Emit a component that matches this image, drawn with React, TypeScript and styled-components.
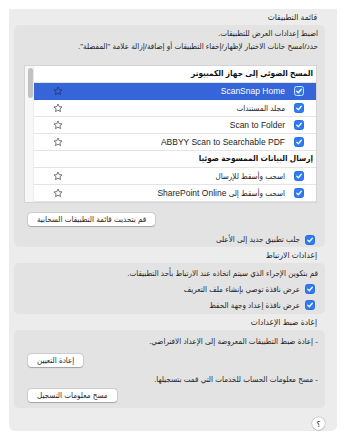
import React from 'react';
import styled, { createGlobalStyle } from 'styled-components';

const GlobalStyle = createGlobalStyle`
  html, body {
    margin: 0;
    padding: 0;
    background: #ffffff;
  }
  body {
    font-family: "Liberation Sans", "DejaVu Sans Condensed", "DejaVu Sans", sans-serif;
    color: #1e1e1e;
  }
`;

const Latin = styled.span`
  font-family: "Liberation Sans", sans-serif;
  font-size: 8.5px;
`;

const scanApps = [
  { name: <Latin>ScanSnap Home</Latin>, key: 'home', selected: true },
  { name: 'مجلد المستندات', key: 'docs', selected: false },
  { name: <Latin>Scan to Folder</Latin>, key: 'folder', selected: false },
  { name: <Latin>ABBYY Scan to Searchable PDF</Latin>, key: 'abbyy', selected: false },
];

const sendApps = [
  { name: 'اسحب وأسقط للإرسال', key: 'send' },
  {
    name: (
      <>
        اسحب وأسقط إلى <Latin>SharePoint Online</Latin>
      </>
    ),
    key: 'sharepoint',
  },
];

const Star = () => (
  <svg width="10" height="10" viewBox="0 0 24 24">
    <polygon
      points="12,2.5 14.9,8.7 21.6,9.4 16.6,13.9 18,20.6 12,17.2 6,20.6 7.4,13.9 2.4,9.4 9.1,8.7"
      fill="none"
      stroke="currentColor"
      strokeWidth="1.8"
      strokeLinejoin="round"
    />
  </svg>
);

const Check = ({ onBlue = false }: { onBlue?: boolean }) => (
  <CheckBox $onBlue={onBlue}>
    <svg width="8" height="8" viewBox="0 0 10 10">
      <path d="M2.2 5.3 L4.2 7.2 L7.9 2.8" fill="none" stroke="#fff" strokeWidth="1.5" strokeLinecap="round" strokeLinejoin="round" />
    </svg>
  </CheckBox>
);

export default function App() {
  return (
    <>
      <GlobalStyle />
      <Page>
        <Panel>
          <SectionTitle>قائمة التطبيقات</SectionTitle>
          <Box $padTop={2} $height={222}>
            <Line>اضبط إعدادات العرض للتطبيقات.</Line>
            <Line>حدد/امسح خانات الاختيار لإظهار/إخفاء التطبيقات أو إضافة/إزالة علامة "المفضلة".</Line>
            <List>
              <Rows>
                <HeaderRow>المسح الضوئي إلى جهاز الكمبيوتر</HeaderRow>
                {scanApps.map((app) => (
                  <AppRow key={app.key} $selected={app.selected}>
                    <Check onBlue={app.selected} />
                    <AppName>{app.name}</AppName>
                    <StarCell $selected={app.selected}>
                      <Star />
                    </StarCell>
                  </AppRow>
                ))}
                <HeaderRow>إرسال البيانات الممسوحة ضوئيا</HeaderRow>
                {sendApps.map((app) => (
                  <AppRow key={app.key}>
                    <Check />
                    <AppName>{app.name}</AppName>
                    <StarCell>
                      <Star />
                    </StarCell>
                  </AppRow>
                ))}
              </Rows>
              <ScrollTrack>
                <ScrollThumb />
              </ScrollTrack>
            </List>
            <Button $top={10}>قم بتحديث قائمة التطبيقات السحابية</Button>
            <CheckRow $top={6}>
              <Check />
              <span>جلب تطبيق جديد إلى الأعلى</span>
            </CheckRow>
          </Box>

          <SectionTitle>إعدادات الارتباط</SectionTitle>
          <Box $padTop={4} $height={51}>
            <Line>قم بتكوين الإجراء الذي سيتم اتخاذه عند الارتباط بأحد التطبيقات.</Line>
            <CheckRow $top={1}>
              <Check />
              <span>عرض نافذة توصي بإنشاء ملف التعريف</span>
            </CheckRow>
            <CheckRow $top={0}>
              <Check />
              <span>عرض نافذة إعداد وجهة الحفظ</span>
            </CheckRow>
          </Box>

          <SectionTitle>إعادة ضبط الإعدادات</SectionTitle>
          <Box $padTop={5} $height={78}>
            <Line>- إعادة ضبط التطبيقات المعروضة إلى الإعداد الافتراضي.</Line>
            <Button $top={6}>إعادة التعيين</Button>
            <Line $top={6}>- مسح معلومات الحساب للخدمات التي قمت بتسجيلها.</Line>
            <Button $top={3}>مسح معلومات التسجيل</Button>
          </Box>

          <Footer>
            <HelpButton>؟</HelpButton>
          </Footer>
        </Panel>
      </Page>
    </>
  );
}

const Page = styled.div`
  width: 344px;
  height: 447px;
  box-sizing: border-box;
  padding: 9px 0 0 9px;
`;

const Panel = styled.div`
  direction: rtl;
  width: 328px;
  height: 422px;
  box-sizing: border-box;
  background: #ececec;
  border-radius: 0 0 6px 6px;
  padding: 0 12px 0 5px;
  display: flex;
  flex-direction: column;
`;

const SectionTitle = styled.div`
  height: 16px;
  line-height: 16px;
  padding-right: 8px;
  font-size: 8.4px;
  color: #262626;
`;

const Box = styled.div<{ $padTop: number; $height: number }>`
  height: ${(p) => p.$height}px;
  box-sizing: border-box;
  background: #e3e3e3;
  border-radius: 5px;
  padding: ${(p) => p.$padTop}px 7px 0 10px;
  display: flex;
  flex-direction: column;
`;

const Line = styled.div<{ $top?: number }>`
  margin-top: ${(p) => p.$top ?? 0}px;
  font-size: 8px;
  line-height: 13px;
  white-space: nowrap;
  color: #1e1e1e;
`;

const List = styled.div`
  margin: 12px 1px 0 0;
  display: flex;
  background: #ffffff;
  border: 1px solid #d4d4d4;
`;

const Rows = styled.div`
  flex: 1;
  display: flex;
  flex-direction: column;
`;

const HeaderRow = styled.div`
  height: 17px;
  box-sizing: border-box;
  border-bottom: 1px solid #e4e4e4;
  padding-right: 3px;
  font-size: 8.2px;
  font-weight: bold;
  line-height: 16px;
  color: #111;
`;

const AppRow = styled.div<{ $selected?: boolean }>`
  height: 17px;
  box-sizing: border-box;
  border-bottom: 1px solid ${(p) => (p.$selected ? '#3565d8' : '#e4e4e4')};
  background: ${(p) => (p.$selected ? '#3565d8' : '#ffffff')};
  color: ${(p) => (p.$selected ? '#ffffff' : '#1e1e1e')};
  display: flex;
  align-items: center;
  padding-right: 12px;
  font-size: 8px;
`;

const AppName = styled.span`
  flex: 1;
  margin-right: 9px;
  white-space: nowrap;
`;

const StarCell = styled.span<{ $selected?: boolean }>`
  display: flex;
  margin-left: 19px;
  color: ${(p) => (p.$selected ? '#1c2f66' : '#4a4a4a')};
`;

const CheckBox = styled.span<{ $onBlue: boolean }>`
  flex: none;
  width: 10px;
  height: 10px;
  box-sizing: border-box;
  border-radius: 2.5px;
  background: #2f7bf5;
  border: ${(p) => (p.$onBlue ? '1px solid #cfe0ff' : '0.5px solid #2a6fe0')};
  display: flex;
  align-items: center;
  justify-content: center;
`;

const ScrollTrack = styled.div`
  width: 9px;
  background: #f7f7f7;
  border-right: 1px solid #ededed;
  padding: 2px 0 0 2px;
  box-sizing: border-box;
`;

const ScrollThumb = styled.div`
  width: 5px;
  height: 30px;
  border-radius: 3px;
  background: #c2c2c2;
`;

const Button = styled.button<{ $top: number }>`
  align-self: flex-end;
  margin: ${(p) => p.$top}px 0 0 4px;
  height: 13px;
  padding: 0 9px;
  border: none;
  border-radius: 3px;
  background: #ffffff;
  box-shadow: 0 0 0 0.5px rgba(0, 0, 0, 0.16), 0 0.5px 1px rgba(0, 0, 0, 0.22);
  font-family: inherit;
  font-size: 8px;
  line-height: 13px;
  color: #1e1e1e;
  white-space: nowrap;
`;

const CheckRow = styled.div<{ $top: number }>`
  margin-top: ${(p) => p.$top}px;
  height: 16px;
  display: flex;
  align-items: center;
  gap: 5px;
  padding-right: 3px;
  font-size: 8px;
  white-space: nowrap;
`;

const Footer = styled.div`
  display: flex;
  padding: 9px 0 0 0;
`;

const HelpButton = styled.div`
  width: 13px;
  height: 13px;
  border-radius: 50%;
  background: #ffffff;
  box-shadow: 0 0 0 0.5px rgba(0, 0, 0, 0.18), 0 0.5px 1px rgba(0, 0, 0, 0.2);
  display: flex;
  align-items: center;
  justify-content: center;
  font-size: 8.5px;
  color: #222;
`;
